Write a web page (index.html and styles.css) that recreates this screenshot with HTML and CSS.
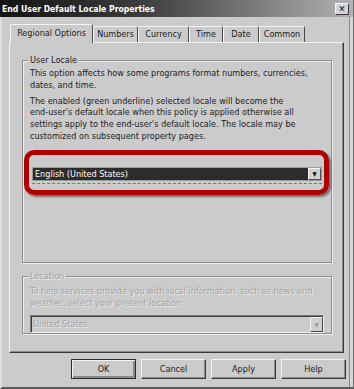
FILE: index.html
```html
<!DOCTYPE html>
<html lang="en">
<head>
    <meta charset="UTF-8">
    <title>End User Default Locale Properties</title>
    <link rel="stylesheet" href="styles.css">
</head>
<body>

    <div class="window">
        <div class="titlebar">
            <span class="title">End User Default Locale Properties</span>
            <span class="close">&#x2715;</span>
        </div>

        <div class="content">
            <div class="tabs">
                <div class="tab active w-regional">Regional Options</div>
                <div class="tab w-numbers">Numbers</div>
                <div class="tab w-currency">Currency</div>
                <div class="tab w-time">Time</div>
                <div class="tab w-date">Date</div>
                <div class="tab w-common">Common</div>
            </div>

            <div class="panel">
                <div class="group locale">
                    <div class="group-title">User Locale</div>
                    <p>This option affects how some programs format numbers, currencies,<br>dates, and time.</p>
                    <p>The enabled (green underline) selected locale will become the<br>end-user's default locale when this policy is applied otherwise all<br>settings apply to the end-user's default locale. The locale may be<br>customized on subsequent property pages.</p>

                    <div class="highlight">
                        <div class="combo selected">
                            <span class="combo-text">English (United States)</span>
                            <span class="drop">&#9660;</span>
                        </div>
                        <div class="underline"></div>
                    </div>
                </div>

                <div class="group location disabled">
                    <div class="group-title">Location</div>
                    <p>To help services provide you with local information, such as news and<br>weather, select your present location:</p>
                    <div class="combo">
                        <span class="combo-text">United States</span>
                        <span class="drop">&#9660;</span>
                    </div>
                </div>
            </div>

            <div class="buttons">
                <button class="button default">OK</button>
                <button class="button">Cancel</button>
                <button class="button">Apply</button>
                <button class="button">Help</button>
            </div>
        </div>
    </div>

</body>
</html>
```

FILE: styles.css
```css
* {
    box-sizing: border-box;
}
body {
    margin: 0;
    background-color: #cbcbcb;
    font-family: 'DejaVu Sans Condensed', 'DejaVu Sans', sans-serif;
    font-size: 9px;
    color: #1c1c1c;
}
.window {
    width: 354px;
    height: 389px;
    border-left: 2px solid #dedede;
    border-right: 1px solid #6e6e6e;
    border-bottom: 2px solid #5a5a5a;
    box-shadow: inset -3px 0 0 #d6d6d6, inset -4px 0 0 #8a8a8a;
}
.titlebar {
    height: 17px;
    margin-left: -2px;
    background: linear-gradient(to right, #141414, #3c3c3c 40%, #b2b2b2);
    display: flex;
    align-items: center;
    justify-content: space-between;
    padding: 0 4px 0 2px;
}
.title {
    color: #fff;
    font-weight: bold;
    font-size: 8.6px;
}
.close {
    width: 14px;
    height: 12px;
    background: #d4d4d4;
    border: 1px solid;
    border-color: #f4f4f4 #3a3a3a #3a3a3a #f4f4f4;
    font-size: 9px;
    font-weight: bold;
    color: #111;
    display: flex;
    align-items: center;
    justify-content: center;
}
.content {
    padding: 5px 0 0 7px;
}
.tabs {
    display: flex;
    align-items: flex-end;
    height: 20px;
    padding-left: 1px;
}
.tab {
    height: 16px;
    border: 1px solid;
    border-bottom: none;
    border-color: #f4f4f4 #4a4a4a transparent #f4f4f4;
    border-radius: 2px 2px 0 0;
    text-align: center;
    line-height: 15px;
    white-space: nowrap;
}
.tab.active {
    height: 19px;
    margin-bottom: -1px;
    position: relative;
    z-index: 1;
    background-color: #cbcbcb;
    line-height: 17px;
}
.w-regional { width: 83px; }
.w-numbers { width: 45px; }
.w-currency { width: 51px; }
.w-time { width: 34px; }
.w-date { width: 36px; }
.w-common { width: 46px; }

.panel {
    width: 335px;
    height: 311px;
    border: 1px solid;
    border-color: #f4f4f4 #3a3a3a #3a3a3a #f4f4f4;
    box-shadow: inset -1px -1px 0 #8a8a8a;
    padding: 17px 11px 0 12px;
}
.group {
    border: 1px solid #8c8c8c;
    box-shadow: 1px 1px 0 #f0f0f0, inset 1px 1px 0 #f0f0f0;
    padding: 0 7px;
}
.group.locale {
    height: 203px;
}
.group.location {
    height: 58px;
    margin-top: 13px;
}
.group-title {
    width: fit-content;
    margin: -7px 0 0 -2px;
    padding: 0 2px;
    background-color: #cbcbcb;
    line-height: 12px;
}
.group p {
    margin: 2px 0 0;
    line-height: 11.6px;
    white-space: nowrap;
}
.group p + p {
    margin-top: 4.6px;
}
.location p {
    margin-top: 4px;
}
.disabled {
    color: #a2a2a2;
    text-shadow: 1px 1px 0 #ececec;
}

.highlight {
    margin: 8px -5px 0 -6px;
    border: 5px solid #b00000;
    border-radius: 10px;
    padding: 12px 2px 6px 3px;
    box-shadow: 2px 2px 2px rgba(0, 0, 0, 0.45);
}
.combo {
    display: flex;
    justify-content: space-between;
    align-items: center;
    border: 1px solid;
    border-color: #7a7a7a #f0f0f0 #f0f0f0 #7a7a7a;
}
.combo.selected {
    height: 14px;
    background-color: #2c2c2c;
    border-color: #9a9a9a;
    color: #fff;
}
.location .combo {
    height: 18px;
    margin-top: 6px;
    box-shadow: inset 1px 1px 0 #3c3c3c;
}
.combo-text {
    padding-left: 2px;
    line-height: 12px;
}
.drop {
    width: 13px;
    height: 12px;
    background-color: #d0d0d0;
    border: 1px solid;
    border-color: #f4f4f4 #4a4a4a #4a4a4a #f4f4f4;
    font-size: 6px;
    line-height: 10px;
    text-align: center;
    color: #000;
    text-shadow: none;
}
.location .drop {
    height: 15px;
    line-height: 13px;
    color: #9a9a9a;
}
.underline {
    margin-top: 2px;
    border-top: 1px dashed #777;
}

.buttons {
    display: flex;
    justify-content: flex-end;
    gap: 5px;
    width: 337px;
    margin-top: 6px;
}
.button {
    width: 65px;
    height: 20px;
    font-family: 'DejaVu Sans Condensed', 'DejaVu Sans', sans-serif;
    font-size: 9px;
    color: #1c1c1c;
    background-color: #cbcbcb;
    border: 1px solid;
    border-color: #f4f4f4 #3a3a3a #3a3a3a #f4f4f4;
    box-shadow: inset -1px -1px 0 #8a8a8a;
    padding: 0;
}
.button.default {
    border-color: #2a2a2a;
    box-shadow: inset 1px 1px 0 #f4f4f4, inset -2px -2px 0 #8a8a8a;
}
```
